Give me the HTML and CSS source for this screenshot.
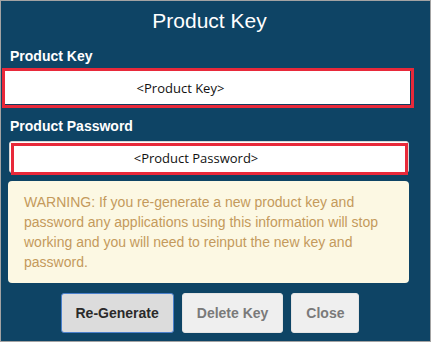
FILE: index.html
```html
<!DOCTYPE html>
<html lang="en">
<head>
  <meta charset="UTF-8" />
  <meta name="viewport" content="width=device-width, initial-scale=1.0"/>
  <title>Product Key</title>
  <link rel="stylesheet" href="styles.css">
</head>
<body>

  <div class="dialog">
    <div class="content">
      <h1 class="title">Product Key</h1>

      <label class="field-label">Product Key</label>
      <div class="key-field">&lt;Product Key&gt;</div>

      <label class="field-label second">Product Password</label>
      <div class="pw-field">
        <div class="pw-inner">&lt;Product Password&gt;</div>
      </div>

      <div class="warning">
        WARNING: If you re-generate a new product key and password any applications using this information will stop working and you will need to reinput the new key and password.
      </div>

      <div class="buttons">
        <button class="btn primary">Re-Generate</button>
        <button class="btn">Delete Key</button>
        <button class="btn">Close</button>
      </div>
    </div>
  </div>

</body>
</html>
```

FILE: styles.css
```css
  body {
    margin: 0;
    font-family: "Liberation Sans", Arial, sans-serif;
  }
  .dialog {
    width: 431px;
    height: 342px;
    box-sizing: border-box;
    border: 1px solid #a3a3a3;
    background: #0e4465;
  }
  .content {
    width: 417px;
  }
  .title {
    margin: 0;
    height: 40px;
    line-height: 40px;
    font-size: 21px;
    font-weight: normal;
    color: white;
    text-align: center;
  }
  .field-label {
    display: block;
    margin: 7px 0 3px 9px;
    height: 17px;
    line-height: 17px;
    font-size: 14px;
    font-weight: bold;
    color: white;
  }
  .field-label.second {
    margin-top: 10px;
    margin-bottom: 6px;
  }
  .key-field {
    margin-left: 1px;
    width: 412px;
    height: 40px;
    box-sizing: border-box;
    border: 3px solid #e8293a;
    background: white;
    box-shadow: inset -1px -1px 0 #123a5c;
    padding-right: 55px;
    text-align: center;
    line-height: 34px;
    font-family: "Open Sans", sans-serif;
    font-size: 13px;
    color: #111;
  }
  .pw-field {
    margin-left: 8px;
    width: 400px;
    height: 32px;
    box-sizing: border-box;
    background: white;
    border: 1px solid #d6d6d6;
    border-radius: 3px;
  }
  .pw-inner {
    margin: 1px 0 0 1px;
    height: 32px;
    box-sizing: border-box;
    border: 3px solid #e8293a;
    padding-right: 27px;
    text-align: center;
    line-height: 25px;
    font-family: "Open Sans", sans-serif;
    font-size: 13px;
    color: #111;
  }
  .warning {
    margin: 8px 0 0 7px;
    width: 401px;
    height: 102px;
    box-sizing: border-box;
    padding: 11px 12px 11px 16px;
    background: #fcf8e3;
    border-radius: 4px;
    color: #c49a5c;
    font-size: 14px;
    line-height: 20px;
  }
  .buttons {
    display: flex;
    justify-content: center;
    gap: 8px;
    margin-top: 10px;
    padding-left: 1px;
  }
  .btn {
    height: 40px;
    padding: 0 14px;
    border: 1px solid #e4e4e4;
    border-radius: 3px;
    background: #efefef;
    color: #7a7a7a;
    font-family: "Liberation Sans", Arial, sans-serif;
    font-size: 14px;
    font-weight: bold;
    white-space: nowrap;
  }
  .btn.primary {
    background: #dcdcdc;
    border-color: #4a80cc;
    color: #2a2a2a;
  }
```
